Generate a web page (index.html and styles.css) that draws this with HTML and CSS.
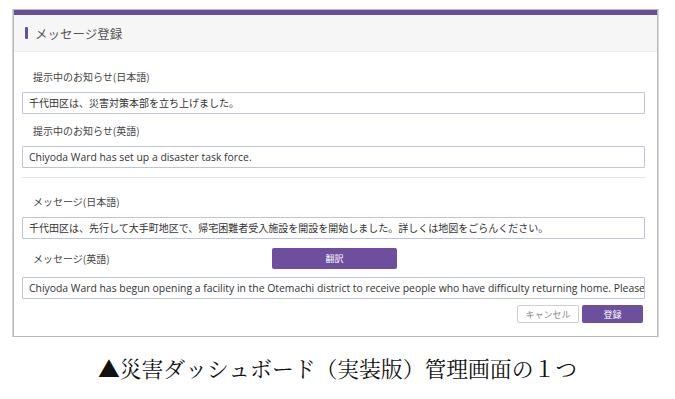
FILE: index.html
```html
<!DOCTYPE html>
<html lang="ja">

<head>
    <meta charset="UTF-8">
    <title>メッセージ登録</title>
    <link rel="stylesheet" href="styles.css">
</head>

<body>

    <div class="panel">
        <div class="panel-head">
            <span class="mark"></span>
            <span class="title">メッセージ登録</span>
        </div>

        <div class="panel-body">
            <div class="label">提示中のお知らせ(日本語)</div>
            <div class="input">千代田区は、災害対策本部を立ち上げました。</div>

            <div class="label">提示中のお知らせ(英語)</div>
            <div class="input en">Chiyoda Ward has set up a disaster task force.</div>

            <div class="sep"></div>

            <div class="label">メッセージ(日本語)</div>
            <div class="input">千代田区は、先行して大手町地区で、帰宅困難者受入施設を開設を開始しました。詳しくは地図をごらんください。</div>

            <div class="row">
                <div class="label row-label">メッセージ(英語)</div>
                <a href="#" class="btn btn-translate">翻訳</a>
            </div>
            <div class="input en">Chiyoda Ward has begun opening a facility in the Otemachi district to receive people who have difficulty returning home. Please see the map for details.</div>

            <div class="actions">
                <a href="#" class="btn btn-cancel">キャンセル</a>
                <a href="#" class="btn btn-save">登録</a>
            </div>
        </div>
    </div>

    <p class="caption">▲災害ダッシュボード（実装版）管理画面の１つ</p>

</body>

</html>
```

FILE: styles.css
```css
body {
    margin: 0;
    padding-top: 9px;
    background: #fff;
    font-family: "Noto Sans CJK JP", "Noto Sans", sans-serif;
}

.panel {
    width: 645px;
    margin-left: 13px;
    box-sizing: border-box;
    border: 1px solid #b9b9b9;
    box-shadow: 1px 0 0 #dcdcdc, -1px 0 0 #d4d4d4;
    background: #fff;
}

.panel-head {
    height: 42px;
    box-sizing: border-box;
    border-top: 5px solid #6b4f9b;
    border-bottom: 1px solid #ececec;
    background: #f7f6f7;
    padding-left: 11px;
    display: flex;
    align-items: center;
}

.mark {
    width: 3px;
    height: 12px;
    border-radius: 1px;
    background: #6b4f9b;
    margin-right: 7px;
}

.title {
    font-size: 12.5px;
    color: #555;
}

.panel-body {
    padding: 17px 12px 13px 8px;
}

.label {
    font-size: 10px;
    line-height: 16px;
    padding-left: 11px;
    color: #444;
    margin-bottom: 7px;
}

.input {
    height: 22px;
    box-sizing: border-box;
    border: 1px solid #bcc6d6;
    border-radius: 1px;
    padding: 0 6px;
    font-size: 10px;
    line-height: 20px;
    color: #333;
    white-space: nowrap;
    overflow: hidden;
    margin-bottom: 9px;
}

.en {
    font-family: "Open Sans", "Noto Sans", sans-serif;
    font-size: 10.4px;
}

.sep {
    height: 1px;
    background: #e6e6e6;
    margin: 2px 0 16px;
}

.row {
    display: flex;
    align-items: center;
    height: 21px;
    margin-bottom: 8px;
}

.row-label {
    width: 250px;
    box-sizing: border-box;
    margin-bottom: 0;
}

a {
    text-decoration: none;
}

.btn {
    display: flex;
    align-items: center;
    justify-content: center;
    box-sizing: border-box;
    border-radius: 2px;
    font-size: 9px;
}

.btn-translate {
    width: 125px;
    height: 21px;
    background: #6d4f9d;
    color: #fff;
}

.actions {
    display: flex;
    justify-content: flex-end;
    gap: 3px;
    margin-top: -3px;
    padding-right: 2px;
}

.btn-cancel {
    width: 62px;
    height: 18px;
    border: 1px solid #cfcfcf;
    background: #fff;
    color: #8a8a8a;
}

.btn-save {
    width: 61px;
    height: 18px;
    background: #6d4f9d;
    color: #fff;
}

.caption {
    margin: 16px 0 0;
    text-align: center;
    font-family: "Noto Serif CJK JP", "Liberation Serif", "Noto Sans CJK JP", serif;
    font-size: 21.8px;
    line-height: 30px;
    color: #111;
}
```
